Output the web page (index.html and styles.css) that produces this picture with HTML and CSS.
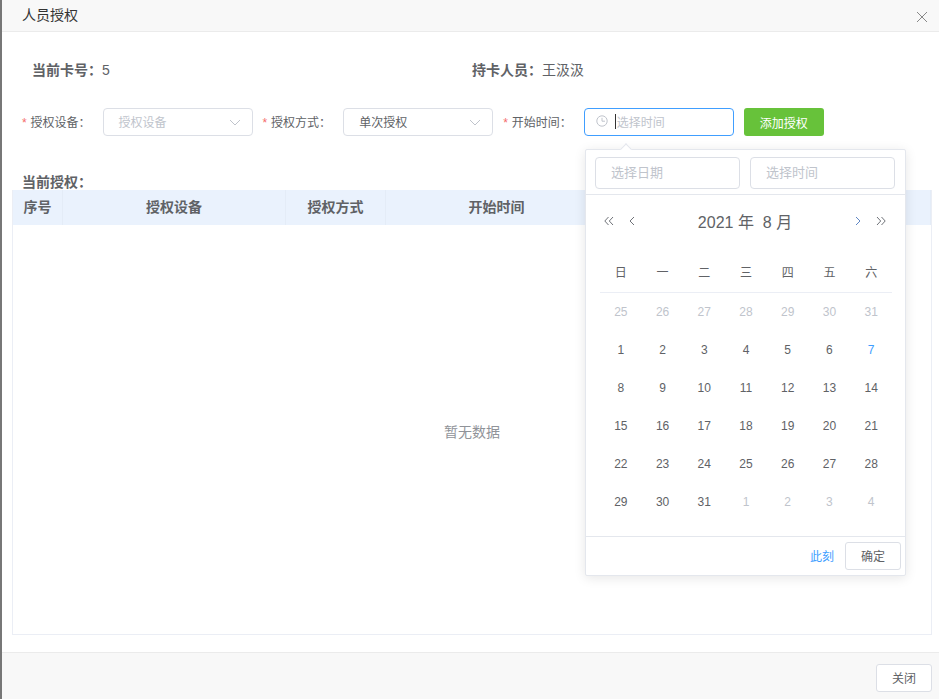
FILE: index.html
```html
<html>
  <head>
    <title>人员授权</title>
    <link rel="stylesheet" href="styles.css">
  </head>
  <body>
    <div class="strip"></div>
    <div class="dialog">
      <div class="dialog_head">
        <span>人员授权</span>
        <svg class="close_icon" width="12" height="12" viewBox="0 0 12 12"><path d="M1 1L11 11M11 1L1 11"/></svg>
      </div>
      <div class="dialog_body">
        <div class="info_row">
          <div class="info_item"><b>当前卡号：</b>5</div>
          <div class="info_item"><b>持卡人员：</b>王汲汲</div>
        </div>
        <div class="form_row">
          <label class="form_label"><i>*</i>授权设备：</label>
          <div class="field">
            <span class="placeholder">授权设备</span>
            <svg class="chevron" width="12" height="7" viewBox="0 0 12 7"><path d="M1 1L6 6L11 1"/></svg>
          </div>
          <label class="form_label"><i>*</i>授权方式：</label>
          <div class="field">
            <span>单次授权</span>
            <svg class="chevron" width="12" height="7" viewBox="0 0 12 7"><path d="M1 1L6 6L11 1"/></svg>
          </div>
          <label class="form_label"><i>*</i>开始时间：</label>
          <div class="field field_focus">
            <svg class="clock" width="12" height="12" viewBox="0 0 12 12"><circle cx="6" cy="6" r="5.2"/><path d="M6 2.8V6.2H9"/></svg>
            <span class="caret"></span>
            <span class="placeholder">选择时间</span>
          </div>
          <button class="btn_add">添加授权</button>
        </div>
        <div class="section_title">当前授权：</div>
        <div class="table">
          <div class="table_head">
            <div>序号</div>
            <div>授权设备</div>
            <div>授权方式</div>
            <div>开始时间</div>
            <div></div>
          </div>
          <div class="table_empty">暂无数据</div>
        </div>
      </div>
      <div class="dialog_foot">
        <button class="btn">关闭</button>
      </div>

      <div class="picker">
        <div class="picker_arrow"></div>
        <div class="picker_inputs">
          <div class="picker_input">选择日期</div>
          <div class="picker_input">选择时间</div>
        </div>
        <div class="picker_nav">
          <svg class="nav_icon" width="10" height="10" viewBox="0 0 10 10"><path d="M4.5 1L0.8 5L4.5 9M9 1L5.3 5L9 9"/></svg>
          <svg class="nav_icon nav_prev" width="6" height="10" viewBox="0 0 6 10"><path d="M5 1L1 5L5 9"/></svg>
          <div class="nav_title">2021 年&nbsp; 8 月</div>
          <svg class="nav_icon nav_hover" width="6" height="10" viewBox="0 0 6 10"><path d="M1 1L5 5L1 9"/></svg>
          <svg class="nav_icon nav_last" width="10" height="10" viewBox="0 0 10 10"><path d="M1 1L4.7 5L1 9M5.5 1L9.2 5L5.5 9"/></svg>
        </div>
        <div class="week_row">
          <span>日</span><span>一</span><span>二</span><span>三</span><span>四</span><span>五</span><span>六</span>
        </div>
        <div class="day_grid">
          <span class="off">25</span><span class="off">26</span><span class="off">27</span><span class="off">28</span><span class="off">29</span><span class="off">30</span><span class="off">31</span>
          <span>1</span><span>2</span><span>3</span><span>4</span><span>5</span><span>6</span><span class="today">7</span>
          <span>8</span><span>9</span><span>10</span><span>11</span><span>12</span><span>13</span><span>14</span>
          <span>15</span><span>16</span><span>17</span><span>18</span><span>19</span><span>20</span><span>21</span>
          <span>22</span><span>23</span><span>24</span><span>25</span><span>26</span><span>27</span><span>28</span>
          <span>29</span><span>30</span><span>31</span><span class="off">1</span><span class="off">2</span><span class="off">3</span><span class="off">4</span>
        </div>
        <div class="picker_foot">
          <a class="now_link">此刻</a>
          <button class="btn">确定</button>
        </div>
      </div>
    </div>
  </body>
</html>
```

FILE: styles.css
```css
* {
  box-sizing: border-box;
}
body {
  margin: 0px;
  height: 699px;
  display: flex;
  overflow: hidden;
  background-color: #FFF;
  color: #606266;
  font-family: "Liberation Sans", "Noto Sans CJK SC", sans-serif;
  font-size: 12px;
}
button {
  font-family: inherit;
  font-size: 12px;
  cursor: pointer;
}
.strip {
  width: 2px;
  background-color: #777;
}
.dialog {
  flex: 1;
  position: relative;
  display: flex;
  flex-direction: column;
}
.dialog_head {
  height: 32px;
  padding: 0 11px 3px 20px;
  display: flex;
  align-items: center;
  justify-content: space-between;
  background-color: #F8F8F8;
  border-bottom: 1px solid #EBEBEB;
  font-size: 14px;
  color: #333;
}
.close_icon {
  fill: none;
  stroke: #888;
  stroke-width: 1;
  margin-top: 6px;
}
.dialog_body {
  flex: 1;
  padding: 27px 7px 0 10px;
  display: flex;
  flex-direction: column;
}
.info_row {
  height: 22px;
  padding: 0 0 2px 20px;
  display: flex;
  align-items: center;
  font-size: 14px;
}
.info_item {
  width: 440px;
}
.info_item b {
  font-weight: bold;
}
.form_row {
  margin-top: 27px;
  padding-left: 10px;
  display: flex;
  align-items: center;
}
.form_label {
  width: 80.6px;
  padding-bottom: 2px;
}
.form_label i {
  font-style: normal;
  color: #F56C6C;
  display: inline-block;
  width: 8.5px;
}
.field {
  width: 150px;
  height: 28px;
  margin-right: 10px;
  padding: 0 0 2px 15px;
  display: flex;
  align-items: center;
  border: 1px solid #DCDFE6;
  border-radius: 4px;
  position: relative;
}
.field_focus {
  padding-left: 11px;
  border-color: #409EFF;
}
.placeholder {
  color: #C0C4CC;
}
.chevron {
  position: absolute;
  right: 11px;
  top: 10px;
  fill: none;
  stroke: #C0C4CC;
  stroke-width: 1;
}
.clock {
  fill: none;
  stroke: #C0C4CC;
  stroke-width: 1;
  margin-right: 7px;
}
.caret {
  width: 1px;
  height: 15px;
  background-color: #333;
  margin-right: 1px;
}
.btn_add {
  width: 80px;
  height: 28px;
  border: 0;
  border-radius: 3px;
  background-color: #67C23A;
  color: #FFF;
}
.section_title {
  margin-top: 37px;
  padding-left: 10px;
  height: 17px;
  line-height: 19px;
  font-size: 14px;
  font-weight: bold;
}
.table {
  flex: 1;
  display: flex;
  flex-direction: column;
  border: 1px solid #EBEEF5;
  border-top: 0;
}
.table_head {
  height: 35px;
  display: grid;
  grid-template-columns: 50px 223px 100px 222px 1fr;
  background-color: #EAF2FD;
  font-size: 14px;
  font-weight: bold;
  text-align: center;
  line-height: 35px;
}
.table_head div {
  border-right: 1px solid #E4ECF7;
}
.table_empty {
  flex: 1;
  padding-top: 2px;
  display: flex;
  align-items: center;
  justify-content: center;
  font-size: 14px;
  color: #909399;
}
.dialog_foot {
  height: 47px;
  margin-top: 17px;
  padding: 11px 7px 0 0;
  display: flex;
  justify-content: flex-end;
  align-items: flex-start;
  background-color: #F8F8F8;
  border-top: 1px solid #EBEBEB;
}
.btn {
  width: 56px;
  height: 28px;
  padding: 0 0 1px;
  border: 1px solid #DCDFE6;
  border-radius: 3px;
  background-color: #FFF;
  color: #606266;
}
.picker {
  position: absolute;
  left: 583px;
  top: 149px;
  width: 321px;
  height: 427px;
  display: flex;
  flex-direction: column;
  background-color: #FFF;
  border: 1px solid #E4E7ED;
  border-radius: 2px;
  box-shadow: 0 2px 12px rgba(0, 0, 0, 0.1);
}
.picker_arrow {
  position: absolute;
  left: 36px;
  top: -5px;
  width: 8px;
  height: 8px;
  background-color: #FFF;
  border-top: 1px solid #E4E7ED;
  border-left: 1px solid #E4E7ED;
  transform: rotate(45deg);
}
.picker_inputs {
  height: 45px;
  padding: 7px 10px 0 9px;
  display: flex;
  gap: 10px;
  border-bottom: 1px solid #E4E7ED;
}
.picker_input {
  width: 145px;
  height: 32px;
  padding-left: 15px;
  line-height: 30px;
  border: 1px solid #DCDFE6;
  border-radius: 4px;
  font-size: 13px;
  color: #C0C4CC;
}
.picker_nav {
  height: 52px;
  margin-bottom: 5px;
  padding: 0 19px 0 18px;
  display: flex;
  align-items: center;
}
.nav_icon {
  fill: none;
  stroke: #6F7278;
  stroke-width: 1;
}
.nav_prev {
  margin-left: 15px;
}
.nav_hover {
  stroke: #5F86C4;
}
.nav_last {
  margin-left: 15px;
}
.nav_title {
  flex: 1;
  text-align: center;
  font-size: 16px;
}
.week_row,
.day_grid {
  margin: 0 13px 0 14px;
  display: grid;
  grid-template-columns: repeat(7, 1fr);
  text-align: center;
}
.week_row {
  height: 41px;
  line-height: 42px;
  border-bottom: 1px solid #EBEEF5;
}
.day_grid {
  grid-auto-rows: 38px;
  line-height: 38px;
}
.off {
  color: #C0C4CC;
}
.today {
  color: #409EFF;
}
.picker_foot {
  margin-top: auto;
  height: 39px;
  padding: 5px 4px 0 0;
  display: flex;
  justify-content: flex-end;
  align-items: flex-start;
  gap: 11px;
  border-top: 1px solid #E4E7ED;
}
.now_link {
  color: #409EFF;
  line-height: 31px;
}
```
